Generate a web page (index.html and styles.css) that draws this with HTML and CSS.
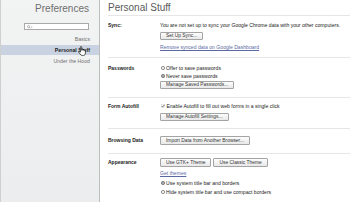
FILE: index.html
```html
<!DOCTYPE html>
<html lang="en">
<head>
    <meta charset="UTF-8">
    <meta name="viewport" content="width=device-width, initial-scale=1.0">
    <title>Preferences</title>
    <link rel="stylesheet" href="styles.css">
</head>
<body>

    <div class="window">
        <div class="sidebar">
            <h1 class="side-title">Preferences</h1>
            <div class="search-box">
                <svg class="search-icon" width="6" height="4" viewBox="0 0 12 8">
                    <circle cx="3.2" cy="3.2" r="2.2" fill="none" stroke="#777" stroke-width="1"/>
                    <line x1="4.8" y1="4.8" x2="6.6" y2="6.8" stroke="#777" stroke-width="1.2"/>
                    <polygon points="8,3.5 11,3.5 9.5,5.5" fill="#777"/>
                </svg>
            </div>
            <ul class="nav">
                <li>Basics</li>
                <li class="selected">Personal Stuff
                    <svg class="cursor" width="8" height="10" viewBox="0 0 10 12">
                        <path d="M3 1.2a0.8 0.8 0 0 1 1.6 0V5h0.4V4.2a0.7 0.7 0 0 1 1.4 0V5.2V4.8a0.7 0.7 0 0 1 1.4 0V5.6a0.7 0.7 0 0 1 1.4 0V8.5C9.2 10.5 8.4 11.5 7 11.5H4.8C3.8 11.5 3.3 10.8 2.6 9.8L0.9 7.4a0.7 0.7 0 0 1 1.1-0.9L3 7.5Z" fill="#fff" stroke="#000" stroke-width="0.8"/>
                    </svg>
                </li>
                <li>Under the Hood</li>
            </ul>
        </div>

        <div class="main">
            <h2 class="page-title">Personal Stuff</h2>

            <div class="section sync">
                <div class="section-label">Sync:</div>
                <div class="section-body">
                    <div class="line">You are not set up to sync your Google Chrome data with your other computers.</div>
                    <button class="btn">Set Up Sync...</button>
                    <a class="line link" href="#">Remove synced data on Google Dashboard</a>
                </div>
            </div>

            <div class="section passwords">
                <div class="section-label">Passwords</div>
                <div class="section-body">
                    <div class="line"><span class="radio"></span>Offer to save passwords</div>
                    <div class="line"><span class="radio checked"></span>Never save passwords</div>
                    <button class="btn">Manage Saved Passwords...</button>
                </div>
            </div>

            <div class="section autofill">
                <div class="section-label">Form Autofill</div>
                <div class="section-body">
                    <div class="line">
                        <svg class="check" width="4" height="4" viewBox="0 0 8 8">
                            <rect x="0.5" y="0.5" width="7" height="7" fill="#fff" stroke="#bbb" stroke-width="0.6"/>
                            <path d="M1.5 4.2L3.3 6.2L6.8 1.5" fill="none" stroke="#333" stroke-width="1.3"/>
                        </svg>Enable Autofill to fill out web forms in a single click
                    </div>
                    <button class="btn">Manage Autofill Settings...</button>
                </div>
            </div>

            <div class="section browsing">
                <div class="section-label">Browsing Data</div>
                <div class="section-body">
                    <button class="btn">Import Data from Another Browser...</button>
                </div>
            </div>

            <div class="section appearance">
                <div class="section-label">Appearance</div>
                <div class="section-body">
                    <div class="btn-row">
                        <button class="btn">Use GTK+ Theme</button>
                        <button class="btn">Use Classic Theme</button>
                    </div>
                    <a class="line link" href="#">Get themes</a>
                    <div class="line spaced"><span class="radio checked"></span>Use system title bar and borders</div>
                    <div class="line"><span class="radio"></span>Hide system title bar and use compact borders</div>
                </div>
            </div>
        </div>
    </div>

</body>
</html>
```

FILE: styles.css
```css
body {
    font-family: "Liberation Sans", Arial, sans-serif;
    margin: 0;
    padding: 0;
    background-color: #fff;
}

.window {
    display: flex;
    width: 360px;
    height: 202px;
    overflow: hidden;
}

/* left column */

.sidebar {
    width: 98px;
    flex: none;
    background: linear-gradient(#f2f3f3, #ecedee);
    border-left: 1px solid #cfcfcf;
    border-right: 1px solid #bdbdbd;
}

.side-title {
    margin: 0;
    padding: 1px 10px 0 0;
    font-size: 10px;
    line-height: 15px;
    font-weight: normal;
    color: #707070;
    text-align: right;
}

.search-box {
    display: flex;
    align-items: center;
    height: 5px;
    margin: 7px 10px 0 23px;
    padding-left: 2px;
    border: 1px solid #a9a9a9;
    background-color: #fff;
}

.nav {
    list-style: none;
    margin: 4px 0 0;
    padding: 0;
}

.nav li {
    position: relative;
    height: 10px;
    line-height: 10px;
    margin-bottom: 1px;
    padding-right: 9px;
    text-align: right;
    font-size: 5.2px;
    color: #727272;
}

.nav li.selected {
    background-color: #c8d2e0;
    color: #1e1e1e;
    font-weight: bold;
}

.cursor {
    position: absolute;
    left: 77px;
    top: 1px;
}

/* right column */

.main {
    flex: 1;
    padding: 0 10px 0 8px;
}

.page-title {
    margin: 0;
    padding-top: 1px;
    font-size: 10px;
    line-height: 14px;
    font-weight: normal;
    color: #5a5a5a;
    border-bottom: 1px solid #e6e6e6;
}

.section {
    display: flex;
    padding: 5px 0 6px;
    border-bottom: 1px solid #e6e6e6;
}

.section.passwords {
    padding: 6px 0 8px;
}

.section.passwords .btn {
    margin-top: 1px;
}

.section.autofill {
    padding: 4px 0 7px;
}

.section.browsing {
    padding: 7px 0 8px;
}

.section.appearance {
    padding-top: 4px;
    border-bottom: none;
}

.section.browsing .btn,
.section.appearance .btn {
    height: 9px;
}

.section-label {
    width: 52px;
    flex: none;
    font-size: 5px;
    font-weight: bold;
    line-height: 8px;
    color: #222;
}

.section.browsing .section-label,
.section.appearance .section-label {
    line-height: 9px;
}

.section-body {
    font-size: 5.1px;
    color: #222;
}

.line {
    display: flex;
    align-items: center;
    height: 8px;
    line-height: 8px;
    white-space: nowrap;
}

.link {
    margin-top: 3px;
    color: #5b69a3;
    text-decoration: underline;
}

.section.appearance .link,
.line.spaced {
    margin-top: 2px;
}

.section.appearance .line:last-child {
    margin-top: 1px;
}

.btn {
    display: block;
    box-sizing: border-box;
    height: 8px;
    margin: 3px 0 0;
    padding: 0 5px;
    font-family: inherit;
    font-size: 4.9px;
    line-height: 6px;
    color: #333;
    border: 1px solid #a4a4a4;
    border-radius: 1px;
    background: linear-gradient(#fdfdfd, #e8e8e8);
}

.section-body > :first-child {
    margin-top: 0;
}

.btn-row {
    display: flex;
    gap: 2px;
}

.btn-row .btn {
    margin-top: 0;
}

.radio {
    box-sizing: border-box;
    width: 3.6px;
    height: 3.6px;
    margin: 0 1.5px 0 1px;
    border: 0.6px solid #7a7a7a;
    border-radius: 50%;
    background-color: #fff;
}

.radio.checked {
    background-color: #555;
    box-shadow: inset 0 0 0 0.6px #ddd;
}

.check {
    margin: 0 1.4px 0 1px;
}
```
